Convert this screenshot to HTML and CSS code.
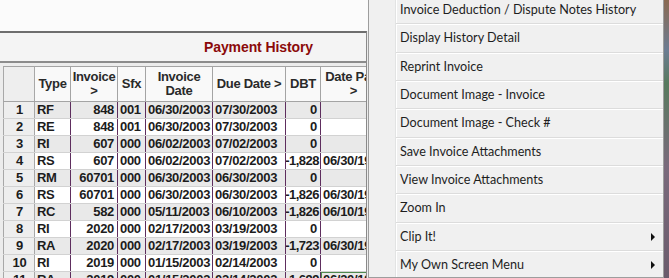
FILE: index.html
```html
<!DOCTYPE html>
<html lang="en">
<head>
    <meta charset="UTF-8">
    <title>Payment History</title>
    <link rel="stylesheet" href="styles.css">
</head>
<body>

<div class="screen">
    <div class="top-space"></div>

    <div class="panel">
        <div class="panel-title">Payment History</div>
        <div class="grid-wrap">
            <table class="grid">
                <colgroup>
                    <col class="c-num"><col class="c-type"><col class="c-inv"><col class="c-sfx">
                    <col class="c-date"><col class="c-due"><col class="c-dbt"><col class="c-paid">
                </colgroup>
                <thead>
                    <tr>
                        <th class="num"></th>
                        <th>Type</th>
                        <th>Invoice<br>&gt;</th>
                        <th>Sfx</th>
                        <th>Invoice<br>Date</th>
                        <th>Due Date &gt;</th>
                        <th>DBT</th>
                        <th>Date Paid<br>&gt;</th>
                    </tr>
                </thead>
                <tbody>
                    <tr class="odd"><td class="num">1</td><td>RF</td><td class="r">848</td><td>001</td><td>06/30/2003</td><td>07/30/2003</td><td class="r">0</td><td></td></tr>
                    <tr><td class="num">2</td><td>RE</td><td class="r">848</td><td>001</td><td>06/30/2003</td><td>07/30/2003</td><td class="r">0</td><td></td></tr>
                    <tr class="odd"><td class="num">3</td><td>RI</td><td class="r">607</td><td>000</td><td>06/02/2003</td><td>07/02/2003</td><td class="r">0</td><td></td></tr>
                    <tr><td class="num">4</td><td>RS</td><td class="r">607</td><td>000</td><td>06/02/2003</td><td>07/02/2003</td><td class="r"><span class="wide">-1,828</span></td><td>06/30/1999</td></tr>
                    <tr class="odd"><td class="num">5</td><td>RM</td><td class="r">60701</td><td>000</td><td>06/30/2003</td><td>06/30/2003</td><td class="r">0</td><td></td></tr>
                    <tr><td class="num">6</td><td>RS</td><td class="r">60701</td><td>000</td><td>06/30/2003</td><td>06/30/2003</td><td class="r"><span class="wide">-1,826</span></td><td>06/30/1999</td></tr>
                    <tr class="odd"><td class="num">7</td><td>RC</td><td class="r">582</td><td>000</td><td>05/11/2003</td><td>06/10/2003</td><td class="r"><span class="wide">-1,826</span></td><td>06/10/1999</td></tr>
                    <tr><td class="num">8</td><td>RI</td><td class="r">2020</td><td>000</td><td>02/17/2003</td><td>03/19/2003</td><td class="r">0</td><td></td></tr>
                    <tr class="odd"><td class="num">9</td><td>RA</td><td class="r">2020</td><td>000</td><td>02/17/2003</td><td>03/19/2003</td><td class="r"><span class="wide">-1,723</span></td><td>06/30/1999</td></tr>
                    <tr><td class="num">10</td><td>RI</td><td class="r">2019</td><td>000</td><td>01/15/2003</td><td>02/14/2003</td><td class="r">0</td><td></td></tr>
                    <tr class="odd"><td class="num">11</td><td>RA</td><td class="r">2019</td><td>000</td><td>01/15/2003</td><td>02/14/2003</td><td class="r"><span class="wide">-1,699</span></td><td class="current">06/30/1999</td></tr>
                </tbody>
            </table>
        </div>
    </div>

    <!-- context menu, open over the grid -->
    <ul class="menu">
        <li>Invoice Deduction / Dispute Notes History</li>
        <li>Display History Detail</li>
        <li>Reprint Invoice</li>
        <li>Document Image - Invoice</li>
        <li>Document Image - Check #</li>
        <li>Save Invoice Attachments</li>
        <li>View Invoice Attachments</li>
        <li>Zoom In</li>
        <li class="sub">Clip It!</li>
        <li class="sub">My Own Screen Menu</li>
    </ul>
    <div class="behind"></div>
</div>

</body>
</html>
```

FILE: styles.css
```css
html, body {
    margin: 0;
    padding: 0;
    overflow: hidden;
}
body {
    font-family: "Liberation Sans", Arial, sans-serif;
    background: #ececec;
}
.screen {
    position: relative;
    width: 669px;
    height: 278px;
    overflow: hidden;
}
.top-space {
    height: 31px;
    width: 368px;
    background: #fbfbfb;
}
.panel {
    width: 366px;
    height: 247px;
    border-top: 2px solid #6e6e6e;
    border-right: 1px solid #8a8a8a;
    background: #ececec;
    overflow: hidden;
}
.panel-title {
    height: 28px;
    line-height: 28px;
    padding-left: 204px;
    background: #f4f4f4;
    border-bottom: 2px solid #8c8c8c;
    color: #8b0a0a;
    font-weight: bold;
    font-size: 14px;
    letter-spacing: -0.1px;
    white-space: nowrap;
}
.grid-wrap {
    padding: 3px 0 0 3px;
}
.grid {
    table-layout: fixed;
    border-collapse: collapse;
    width: 383px;
    font-size: 13px;
    letter-spacing: -0.3px;
    font-weight: bold;
    color: #1c1c1c;
}
.c-num { width: 31px; }
.c-type { width: 36px; }
.c-inv { width: 47px; }
.c-sfx { width: 28px; }
.c-date { width: 67px; }
.c-due { width: 73px; }
.c-dbt { width: 35px; }
.c-paid { width: 66px; }

.grid th {
    height: 34px;
    padding: 0 1px;
    background: #f9f9f9;
    border: 1px solid #a4a4a4;
    font-weight: bold;
    line-height: 14px;
    color: #2a2a2a;
    overflow: hidden;
    white-space: nowrap;
}
.grid td {
    height: 16px;
    padding: 0 1px 0 2px;
    border-left: 1px solid #5e2e5e;
    border-right: 1px solid #5e2e5e;
    border-bottom: 1px solid #d2d2d2;
    background: #ffffff;
    overflow: hidden;
    white-space: nowrap;
    line-height: 16px;
}
.grid tr.odd td {
    background: #e9e9e9;
}
.grid td.r {
    text-align: right;
    padding-right: 3px;
}
.grid .wide {
    display: flex;
    justify-content: flex-end;
    margin-left: -3px;
    margin-right: -2px;
    letter-spacing: -0.5px;
}
.grid .num,
.grid tr.odd td.num {
    background: #eeeeee;
    border-left: 1px solid #a8a8a8;
    border-right: 1px solid #a8a8a8;
    text-align: center;
}
.grid td.current {
    outline: 1px solid #4f8a4f;
    outline-offset: -1px;
}

.menu {
    position: absolute;
    left: 368px;
    top: -5px;
    width: 294px;
    height: 281px;
    margin: 0;
    padding: 0;
    list-style: none;
    background: #f0f0f0;
    border: 1px solid #9d9d9d;
    font-family: Lato, sans-serif;
    font-size: 12.6px;
    color: #1e1e1e;
}
.menu::before {
    content: "";
    position: absolute;
    left: 26px;
    top: 0;
    bottom: 0;
    border-left: 1px solid #e2e3e3;
    border-right: 1px solid #ffffff;
}
.menu li {
    position: relative;
    height: 27.33px;
    line-height: 27px;
    margin-left: 27px;
    padding-left: 4px;
    border-bottom: 1px solid #dcdcdc;
    box-shadow: 0 1px 0 #ffffff;
    white-space: nowrap;
}
.menu li:last-child {
    border-bottom: none;
    box-shadow: none;
}
.menu li.sub::after {
    content: "";
    position: absolute;
    right: 8px;
    top: 10px;
    border-top: 4px solid transparent;
    border-bottom: 4px solid transparent;
    border-left: 4px solid #111;
}
.behind {
    position: absolute;
    left: 664px;
    top: 0;
    width: 5px;
    height: 278px;
    background: linear-gradient(#8a6a52 0%, #6c7c92 18%, #587a5e 30%, #7a6a7c 60%, #6b5c6c 100%);
}
```
